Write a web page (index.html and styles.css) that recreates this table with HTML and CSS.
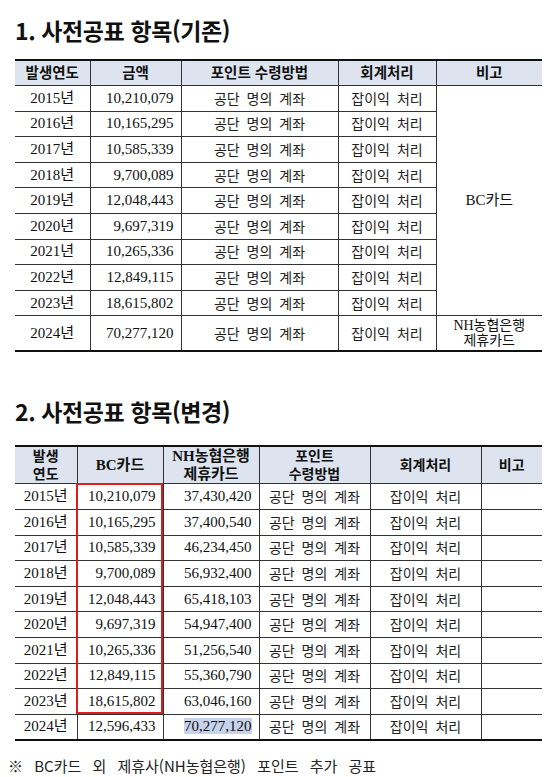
FILE: index.html
```html
<!DOCTYPE html>
<html lang="ko">
<head>
<meta charset="utf-8">
<link rel="stylesheet" href="styles.css">
</head>
<body>
<h2 class="title title-first">1. 사전공표 항목(기존)</h2>
<table class="grid grid-old">
  <colgroup>
    <col style="width:75px"><col style="width:91px"><col style="width:157px"><col style="width:98px"><col style="width:106px">
  </colgroup>
  <thead>
    <tr class="head-row"><th>발생연도</th><th>금액</th><th>포인트 수령방법</th><th>회계처리</th><th>비고</th></tr>
  </thead>
  <tbody>
    <tr><td class="c">2015년</td><td class="r">10,210,079</td><td class="c m">공단 명의 계좌</td><td class="c m">잡이익 처리</td><td class="c note" rowspan="9">BC카드</td></tr>
    <tr><td class="c">2016년</td><td class="r">10,165,295</td><td class="c m">공단 명의 계좌</td><td class="c m">잡이익 처리</td></tr>
    <tr><td class="c">2017년</td><td class="r">10,585,339</td><td class="c m">공단 명의 계좌</td><td class="c m">잡이익 처리</td></tr>
    <tr><td class="c">2018년</td><td class="r">9,700,089</td><td class="c m">공단 명의 계좌</td><td class="c m">잡이익 처리</td></tr>
    <tr><td class="c">2019년</td><td class="r">12,048,443</td><td class="c m">공단 명의 계좌</td><td class="c m">잡이익 처리</td></tr>
    <tr><td class="c">2020년</td><td class="r">9,697,319</td><td class="c m">공단 명의 계좌</td><td class="c m">잡이익 처리</td></tr>
    <tr><td class="c">2021년</td><td class="r">10,265,336</td><td class="c m">공단 명의 계좌</td><td class="c m">잡이익 처리</td></tr>
    <tr><td class="c">2022년</td><td class="r">12,849,115</td><td class="c m">공단 명의 계좌</td><td class="c m">잡이익 처리</td></tr>
    <tr><td class="c">2023년</td><td class="r">18,615,802</td><td class="c m">공단 명의 계좌</td><td class="c m">잡이익 처리</td></tr>
    <tr class="tall-row"><td class="c">2024년</td><td class="r">70,277,120</td><td class="c m">공단 명의 계좌</td><td class="c m">잡이익 처리</td><td class="c two">NH농협은행<br>제휴카드</td></tr>
  </tbody>
</table>

<h2 class="title title-second">2. 사전공표 항목(변경)</h2>
<div class="wrap">
<table class="grid grid-new">
  <colgroup>
    <col style="width:62px"><col style="width:86px"><col style="width:96px"><col style="width:111px"><col style="width:111px"><col style="width:61px">
  </colgroup>
  <thead>
    <tr class="head-row2"><th>발생<br>연도</th><th class="serifhead">BC카드</th><th class="serifhead">NH농협은행<br>제휴카드</th><th>포인트<br>수령방법</th><th>회계처리</th><th>비고</th></tr>
  </thead>
  <tbody>
    <tr><td class="c">2015년</td><td class="r">10,210,079</td><td class="r">37,430,420</td><td class="c m">공단 명의 계좌</td><td class="c m">잡이익 처리</td><td></td></tr>
    <tr><td class="c">2016년</td><td class="r">10,165,295</td><td class="r">37,400,540</td><td class="c m">공단 명의 계좌</td><td class="c m">잡이익 처리</td><td></td></tr>
    <tr><td class="c">2017년</td><td class="r">10,585,339</td><td class="r">46,234,450</td><td class="c m">공단 명의 계좌</td><td class="c m">잡이익 처리</td><td></td></tr>
    <tr><td class="c">2018년</td><td class="r">9,700,089</td><td class="r">56,932,400</td><td class="c m">공단 명의 계좌</td><td class="c m">잡이익 처리</td><td></td></tr>
    <tr><td class="c">2019년</td><td class="r">12,048,443</td><td class="r">65,418,103</td><td class="c m">공단 명의 계좌</td><td class="c m">잡이익 처리</td><td></td></tr>
    <tr><td class="c">2020년</td><td class="r">9,697,319</td><td class="r">54,947,400</td><td class="c m">공단 명의 계좌</td><td class="c m">잡이익 처리</td><td></td></tr>
    <tr><td class="c">2021년</td><td class="r">10,265,336</td><td class="r">51,256,540</td><td class="c m">공단 명의 계좌</td><td class="c m">잡이익 처리</td><td></td></tr>
    <tr><td class="c">2022년</td><td class="r">12,849,115</td><td class="r">55,360,790</td><td class="c m">공단 명의 계좌</td><td class="c m">잡이익 처리</td><td></td></tr>
    <tr><td class="c">2023년</td><td class="r">18,615,802</td><td class="r">63,046,160</td><td class="c m">공단 명의 계좌</td><td class="c m">잡이익 처리</td><td></td></tr>
    <tr><td class="c">2024년</td><td class="r">12,596,433</td><td class="r"><span class="hl">70,277,120</span></td><td class="c m">공단 명의 계좌</td><td class="c m">잡이익 처리</td><td></td></tr>
  </tbody>
</table>
<div class="redbox"></div>
</div>
<p class="foot">※ BC카드 외 제휴사(NH농협은행) 포인트 추가 공표</p>
</body>
</html>
```
FILE: styles.css
```css
html, body { margin: 0; padding: 0; background: #fff; }
body {
  padding: 0 17px 0 15px;
  color: #111;
  font-family: "Liberation Serif", "Noto Sans CJK KR", serif;
}
.title {
  margin: 0;
  font-family: "Noto Sans CJK KR", sans-serif;
  font-weight: 700;
  font-size: 23px;
  letter-spacing: -0.4px;
  line-height: 32px;
  color: #111;
}
.title-first { margin-top: 14px; margin-bottom: 13px; }
.title-second { margin-top: 43px; margin-bottom: 18px; }
.grid {
  width: 527px;
  border-collapse: collapse;
  table-layout: fixed;
  border-top: 2px solid #111;
  border-bottom: 2px solid #111;
}
.grid th, .grid td {
  border: 1px solid #333;
  padding: 0 7px;
  white-space: nowrap;
  overflow: visible;
}
.grid tr > :first-child { border-left: none; }
.grid tr > :last-child { border-right: none; }
.grid td.note { border-right: none; }
.grid th {
  background: #dde4ef;
  font-family: "Liberation Sans", "Noto Sans CJK KR", sans-serif;
  font-weight: 700;
  font-size: 14.5px;
  line-height: 17px;
  text-align: center;
  color: #111;
}
.head-row2 th { line-height: 18px; font-size: 14px; }
.grid th.serifhead {
  font-family: "Liberation Serif", "Noto Sans CJK KR", serif;
  font-size: 15px;
}
.grid td {
  font-size: 15px;
  line-height: 17px;
  height: 24.6px;
}
.head-row th { height: 24px; }
.head-row2 th { height: 36px; }
.tall-row td { height: 34px; }
.c { text-align: center; }
.r { text-align: right; }
.m {
  font-family: "Noto Sans CJK KR", sans-serif;
  font-size: 14px !important;
  word-spacing: 3px;
  color: #222;
}
.note { font-size: 14px; }
.two { line-height: 15px !important; font-size: 14px !important; }
.wrap { position: relative; width: 527px; }
.redbox {
  position: absolute;
  left: 61px;
  top: 38px;
  width: 87px;
  height: 231px;
  border: 2px solid #e01b1b;
  box-sizing: border-box;
  pointer-events: none;
}
.hl { background: #c7d3ea; }
.foot {
  margin: 15px 0 0 -7px;
  font-family: "Noto Sans CJK KR", sans-serif;
  font-size: 15px;
  word-spacing: 7px;
  line-height: 20px;
  color: #222;
}
```
